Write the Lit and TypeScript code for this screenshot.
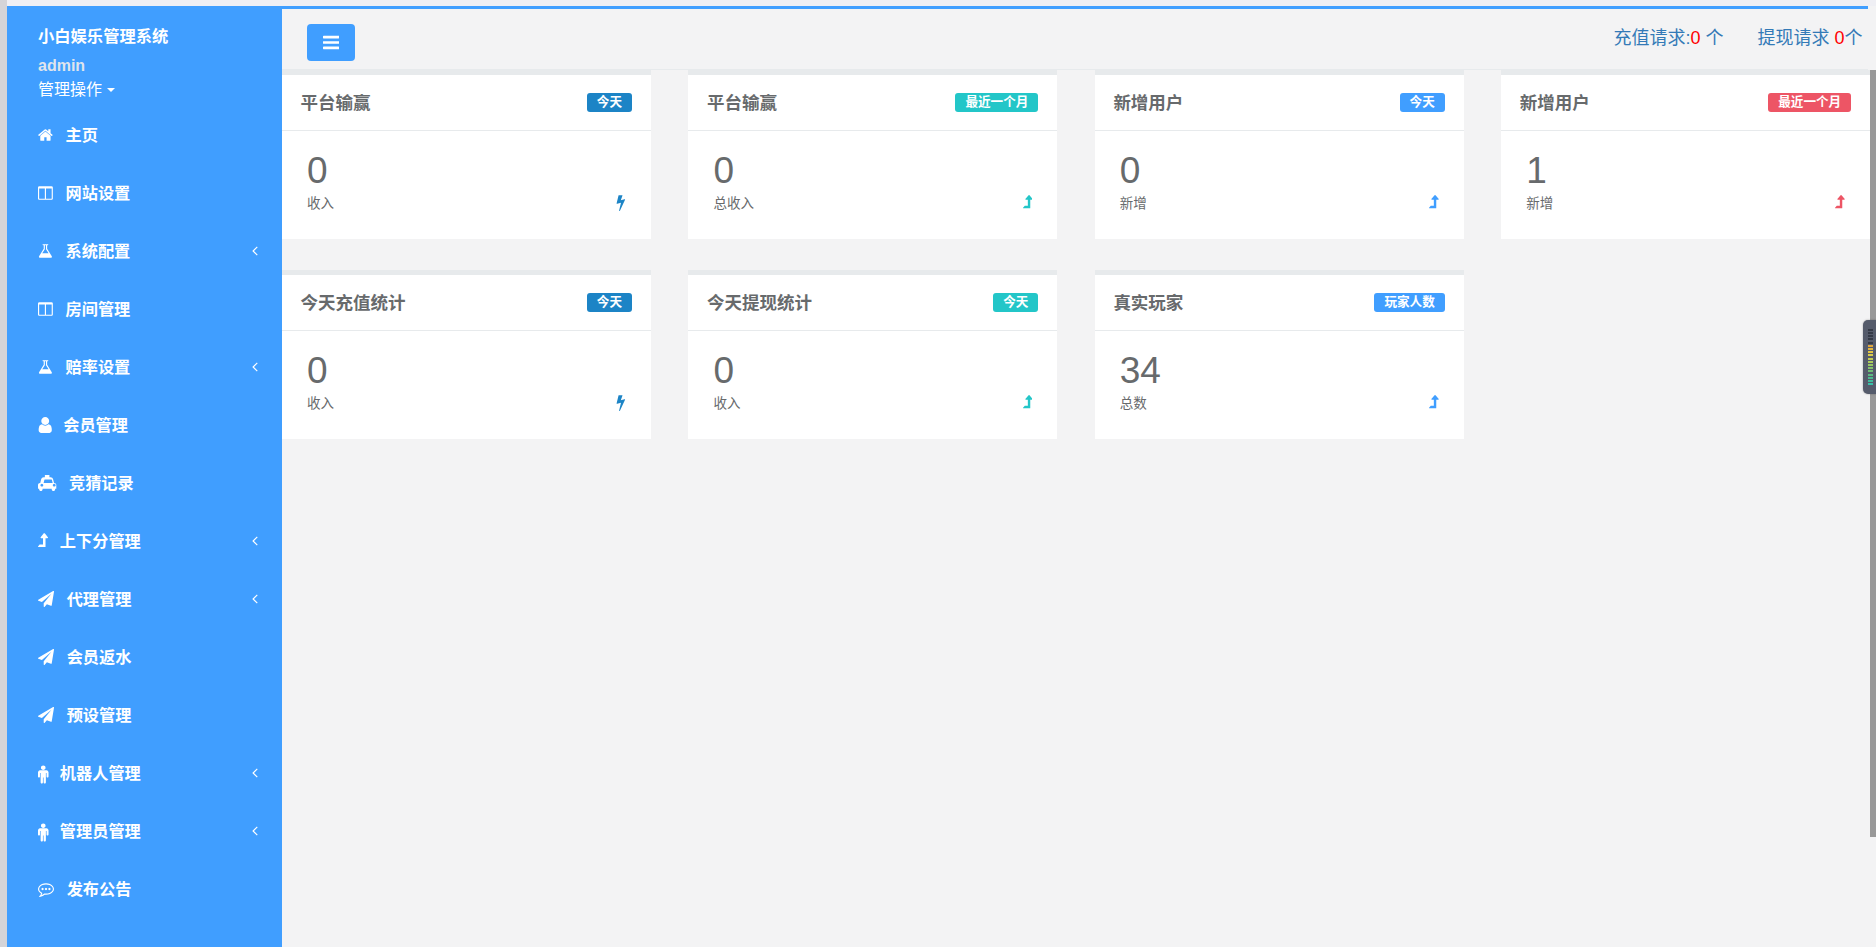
import { LitElement, html, css, svg } from "lit";
import { customElement } from "lit/decorators.js";

type Ic = { vb: string; w: number; d: string };
const I: Record<string, Ic> = {
  home: { vb: "64 0 1664 1792", w: 1664, d: "M1472 992v480q0 26-19 45t-45 19h-384v-384h-256v384h-384q-26 0-45-19t-19-45v-480q0-1 .5-3t.5-3l575-474 575 474q1 2 1 6zm223-69l-62 74q-8 9-21 11h-3q-13 0-21-7l-692-577-692 577q-12 8-24 7-13-2-21-11l-62-74q-8-10-7-23.500t11-21.500l719-599q32-26 76-26t76 26l244 204v-195q0-14 9-23t23-9h192q14 0 23 9t9 23v408l219 182q10 8 11 21.500t-7 23.500z" },
  columns: { vb: "64 0 1664 1792", w: 1664, d: "M224 1536h608v-1152h-640v1120q0 13 9.500 22.500t22.500 9.500zm1376-32v-1120h-640v1152h608q13 0 22.500-9.500t9.500-22.500zm128-1216v1216q0 66-47 113t-113 47h-1344q-66 0-113-47t-47-113v-1216q0-66 47-113t113-47h1344q66 0 113 47t47 113z" },
  flask: { vb: "64 0 1664 1792", w: 1664, d: "M1591 1448q56 89 21.500 152.500t-140.500 63.500h-1152q-106 0-140.500-63.500t21.500-152.500l503-793v-399h-64q-26 0-45-19t-19-45 19-45 45-19h512q26 0 45 19t19 45-19 45-45 19h-64v399zm-779-725l-272 429h712l-272-429-20-31v-436h-128v436z" },
  user: { vb: "192 0 1408 1792", w: 1408, d: "M1536 1399q0 109-62.500 187t-150.500 78h-854q-88 0-150.500-78t-62.500-187q0-85 8.500-160.500t31.500-152 58.500-131 94-89 134.500-34.500q131 128 313 128t313-128q76 0 134.500 34.500t94 89 58.500 131 31.500 152 8.500 160.500zm-256-887q0 159-112.500 271.500t-271.500 112.500-271.500-112.500-112.500-271.500 112.500-271.500 271.500-112.500 271.500 112.500 112.500 271.500z" },
  taxi: { vb: "-128 0 2048 1792", w: 2048, d: "M1696 896q93 0 158.500 65.500t65.500 158.500v384q0 14-9 23t-23 9h-96v64q0 80-56 136t-136 56-136-56-56-136v-64h-1024v64q0 80-56 136t-136 56-136-56-56-136v-64h-96q-14 0-23-9t-9-23v-384q0-93 65.500-158.500t158.500-65.500h28l105-419q23-94 104-157.500t179-63.500h128v-224q0-14 9-23t23-9h448q14 0 23 9t9 23v224h128q98 0 179 63.500t104 157.500l105 419h28zm-1392 400q66 0 113-47t47-113-47-113-113-47-113 47-47 113 47 113 113 47zm196-400h1016l-89-357q-2-8-14-17.500t-21-9.500h-768q-9 0-21 9.500t-14 17.500zm1188 400q66 0 113-47t47-113-47-113-113-47-113 47-47 113 47 113 113 47z" },
  up: { vb: "256 0 1024 1792", w: 1024, d: "M1271 572q-16 36-57 36h-192v864q0 14-9 23t-23 9h-704q-21 0-29-18-8-20 4-35l160-192q9-11 25-11h320v-640h-192q-40 0-58-37-17-37 9-68l320-384q18-22 49-22t49 22l320 384q27 32 9 69z" },
  plane: { vb: "0 0 1792 1792", w: 1792, d: "M1764 11q33 24 27 64l-256 1536q-5 29-32 45-14 8-31 8-11 0-24-5l-453-185-242 295q-18 23-49 23-13 0-22-4-19-7-30.500-23.500t-11.500-36.500v-349l864-1059-1069 925-395-162q-37-14-40-55-2-40 32-59l1664-960q15-9 32-9 20 0 36 11z" },
  male: { vb: "0 0 1024 1792", w: 1024, d: "M1024 832v416q0 40-28 68t-68 28-68-28-28-68v-352h-64v912q0 46-33 79t-79 33-79-33-33-79v-464h-64v464q0 46-33 79t-79 33-79-33-33-79v-912h-64v352q0 40-28 68t-68 28-68-28-28-68v-416q0-80 56-136t136-56h640q80 0 136 56t56 136zm-288-448q0 93-65.500 158.500t-158.500 65.500-158.500-65.500-65.500-158.500 65.500-158.500 158.500-65.500 158.500 65.500 65.500 158.500z" },
  comment: { vb: "0 0 1792 1792", w: 1792, d: "M640 896q0 53-37.500 90.500t-90.500 37.500-90.500-37.500-37.500-90.500 37.500-90.500 90.500-37.500 90.500 37.500 37.500 90.500zm384 0q0 53-37.500 90.500t-90.500 37.500-90.500-37.500-37.500-90.500 37.500-90.500 90.500-37.500 90.500 37.500 37.500 90.500zm384 0q0 53-37.500 90.500t-90.500 37.500-90.500-37.500-37.500-90.500 37.500-90.500 90.500-37.500 90.500 37.500 37.500 90.500zm-512-512q-204 0-381.500 69.500t-282 187.500-104.500 255q0 112 71.500 213.500t201.500 175.500l87 50-27 96q-24 91-70 172 152-63 275-171l43-38 57 6q69 8 130 8 204 0 381.500-69.500t282-187.500 104.500-255-104.500-255-282-187.500-381.500-69.500zm896 512q0 174-120 321.500t-326 233-450 85.500q-70 0-145-8-198 175-460 242-49 14-114 22h-5q-15 0-27-10.500t-16-27.500v-1q-3-4-.5-12t2-10 4.500-9.500l6-9 7-8.500 8-9q7-8 31-34.500t34.500-38 31-39.500 32.500-51 27-59 26-76q-157-89-247.500-220t-90.500-281q0-174 120-321.500t326-233 450-85.500 450 85.500 326 233 120 321.500z" },
  bolt: { vb: "384 0 1024 1792", w: 1024, d: "M1333 566q18 20 7 44l-540 1157q-13 25-42 25-4 0-14-2-17-5-25.500-19t-4.500-30l197-808-406 101q-4 1-12 1-18 0-31-11-18-15-13-39l201-825q4-14 16-23t28-9h328q19 0 32 12.500t13 29.500q0 8-5 18l-171 463 396-98q8-2 12-2 19 0 34 15z" },
  bars: { vb: "128 0 1536 1792", w: 1536, d: "M1664 1344v128q0 26-19 45t-45 19h-1408q-26 0-45-19t-19-45v-128q0-26 19-45t45-19h1408q26 0 45 19t19 45zm0-512v128q0 26-19 45t-45 19h-1408q-26 0-45-19t-19-45v-128q0-26 19-45t45-19h1408q26 0 45 19t19 45zm0-512v128q0 26-19 45t-45 19h-1408q-26 0-45-19t-19-45v-128q0-26 19-45t45-19h1408q26 0 45 19t19 45z" },
  angle: { vb: "576 64 640 1792", w: 640, d: "M1203 544q0 13-10 23l-393 393 393 393q10 10 10 23t-10 23l-50 50q-10 10-23 10t-23-10l-466-466q-10-10-10-23t10-23l466-466q10-10 23-10t23 10l50 50q10 10 10 23z" },
};

const icon = (n: string, size = 16) => {
  const i = I[n];
  const w = (i.w / 1792) * size;
  return html`<svg class="ic ic-${n}" viewBox=${i.vb} width=${w} height=${size} fill="currentColor">${svg`<path d=${i.d}></path>`}</svg>`;
};

const NAV: [string, string, boolean][] = [
  ["home", "主页", false],
  ["columns", "网站设置", false],
  ["flask", "系统配置", true],
  ["columns", "房间管理", false],
  ["flask", "赔率设置", true],
  ["user", "会员管理", false],
  ["taxi", "竞猜记录", false],
  ["up", "上下分管理", true],
  ["plane", "代理管理", true],
  ["plane", "会员返水", false],
  ["plane", "预设管理", false],
  ["male", "机器人管理", true],
  ["male", "管理员管理", true],
  ["comment", "发布公告", false],
];

type Card = { t: string; tag: string; c: string; n: string; s: string; i: string };
const CARDS: Card[] = [
  { t: "平台输赢", tag: "今天", c: "navy", n: "0", s: "收入", i: "bolt" },
  { t: "平台输赢", tag: "最近一个月", c: "teal", n: "0", s: "总收入", i: "up" },
  { t: "新增用户", tag: "今天", c: "blue", n: "0", s: "新增", i: "up" },
  { t: "新增用户", tag: "最近一个月", c: "red", n: "1", s: "新增", i: "up" },
  { t: "今天充值统计", tag: "今天", c: "navy", n: "0", s: "收入", i: "bolt" },
  { t: "今天提现统计", tag: "今天", c: "teal", n: "0", s: "收入", i: "up" },
  { t: "真实玩家", tag: "玩家人数", c: "blue", n: "34", s: "总数", i: "up" },
];

const LEDS = ["#353a47","#353a47","#353a47","#353a47","#353a47","#e0a63c","#e2b53f","#e2c544","#d8cc4c","#c4cc55","#aecb5c","#98c764","#84c26c","#70bd76","#5cb982","#4cb98e","#3fbb9c","#38c0a8"];

@customElement("app-root")
export class AppRoot extends LitElement {
  static styles = css`
    :host {
      display: block;
      position: relative;
      height: 947px;
      overflow: hidden;
      background: #f3f3f4;
      font-family: "Liberation Sans", "Noto Sans CJK SC", sans-serif;
      color: #676a6c;
    }
    .ic { display: block; }
    .shell { display: flex; height: 947px; }
    .gutter { width: 7px; background: #d4d4d8; flex: none; }
    .col { flex: 1; display: flex; flex-direction: column; min-width: 0; }
    .topline { height: 6px; background: #efeff4; flex: none; }
    .frame { flex: 1; display: flex; min-height: 0; }
    .side { width: 275px; flex: none; background: #409eff; color: #fff; box-sizing: border-box; padding-left: 31px; }
    .brand { height: 99px; box-sizing: border-box; padding-top: 19px; font-size: 16px; }
    .brand b { display: block; line-height: 23px; font-size: 16.3px; }
    .brand .who { display: block; color: #dfe4ed; font-weight: 700; line-height: 22px; margin-top: 7px; }
    .brand .op { display: flex; align-items: center; line-height: 25px; }
    .caret { width: 0; height: 0; border: 4.5px solid transparent; border-top-color: #fff; border-bottom: 0; margin-left: 5px; }
    .nav { display: flex; align-items: center; height: 58px; font-size: 16.2px; font-weight: 700; padding-right: 24px; }
    .nav .ic { flex: none; margin: 2px 12.7px 0 0; overflow: visible; }
    .nav .ic-male, .nav .ic-user { transform: scale(1.15); transform-origin: 0 50%; }
    .nav .ic-up { transform: scale(1.1); transform-origin: 0 50%; }
    .nav .label { flex: 1; }
    .nav .more .ic { margin-right: 0; }
    .main { flex: 1; min-width: 0; display: flex; flex-direction: column; }
    .bar { flex: none; width: 1586px; height: 64px; box-sizing: border-box; border-top: 3px solid #409eff; border-bottom: 1px solid #e7eaec; display: flex; align-items: center; padding-left: 25px; }
    .toggle { width: 48px; height: 37px; border: 0; border-radius: 4px; background: #409eff; color: #fff; display: flex; align-items: center; justify-content: center; padding: 0; margin-top: 7px; }
    .req { margin-left: auto; display: flex; font-size: 18px; color: #337ab7; margin-top: -7px; padding-right: 5.5px; }
    .req .two { margin-left: 34px; }
    .req i { font-style: normal; color: #f00; }
    .grid { display: grid; grid-template-columns: repeat(4, 369px); column-gap: 37.4px; row-gap: 31px; grid-auto-rows: 169px; }
    .card { background: #fff; border-top: 5px solid #e7eaec; display: flex; flex-direction: column; min-width: 0; }
    .head { height: 56px; flex: none; box-sizing: border-box; border-bottom: 1px solid #e7eaec; display: flex; align-items: center; justify-content: space-between; padding: 0 19px 0 18.6px; }
    .head h5 { margin: -2px 0 0; font-size: 17.5px; font-weight: 700; color: #676a6c; }
    .tag { height: 19px; box-sizing: border-box; padding: 0 10px; border-radius: 3px; font-size: 12.6px; font-weight: 700; line-height: 19px; color: #fff; }
    .navy { background: #1c84c6; }
    .teal { background: #23c6c8; }
    .blue { background: #409eff; }
    .red { background: #ed5565; }
    .c-navy { color: #1c84c6; }
    .c-teal { color: #23c6c8; }
    .c-blue { color: #409eff; }
    .c-red { color: #ed5565; }
    .body { flex: 1; padding: 19px 25px 0 25px; }
    .num { font-size: 37px; line-height: 42px; color: #676a6c; }
    .foot { display: flex; justify-content: space-between; align-items: center; font-size: 13.5px; line-height: 20px; margin-top: 2px; }
    .foot .ic { margin-top: -4px; }
    .scroll { position: absolute; right: 0; top: 70px; width: 6px; height: 767px; background: #999; }
    .widget { position: absolute; right: 0; top: 320px; width: 13px; height: 74px; box-sizing: border-box; background: #555b6b; border-radius: 5px 0 0 5px; box-shadow: 0 0 2px rgba(0, 0, 0, 0.35); display: flex; flex-direction: column; justify-content: center; gap: 1.2px; padding-left: 5px; }
    .widget u { display: block; width: 5px; height: 2px; }
  `;

  render() {
    return html`
      <div class="shell">
        <div class="gutter"></div>
        <div class="col">
          <div class="topline"></div>
          <div class="frame">
            <aside class="side">
              <div class="brand">
                <b>小白娱乐管理系统</b>
                <span class="who">admin</span>
                <span class="op">管理操作<span class="caret"></span></span>
              </div>
              ${NAV.map(([ic, label, more]) => html`<div class="nav">${icon(ic)}<span class="label">${label}</span>${more ? html`<span class="more">${icon("angle")}</span>` : ""}</div>`)}
            </aside>
            <main class="main">
              <div class="bar">
                <button class="toggle">${icon("bars", 19)}</button>
                <div class="req">
                  <div>充值请求:<i>0</i> 个</div>
                  <div class="two">提现请求 <i>0</i>个</div>
                </div>
              </div>
              <div class="grid">
                ${CARDS.map((c) => html`<section class="card">
                  <div class="head"><h5>${c.t}</h5><span class="tag ${c.c}">${c.tag}</span></div>
                  <div class="body">
                    <div class="num">${c.n}</div>
                    <div class="foot"><span>${c.s}</span><span class="c-${c.c}">${icon(c.i, 17)}</span></div>
                  </div>
                </section>`)}
              </div>
            </main>
          </div>
        </div>
      </div>
      <div class="scroll"></div>
      <div class="widget">${LEDS.map((c) => html`<u style="background:${c}"></u>`)}</div>
    `;
  }
}
